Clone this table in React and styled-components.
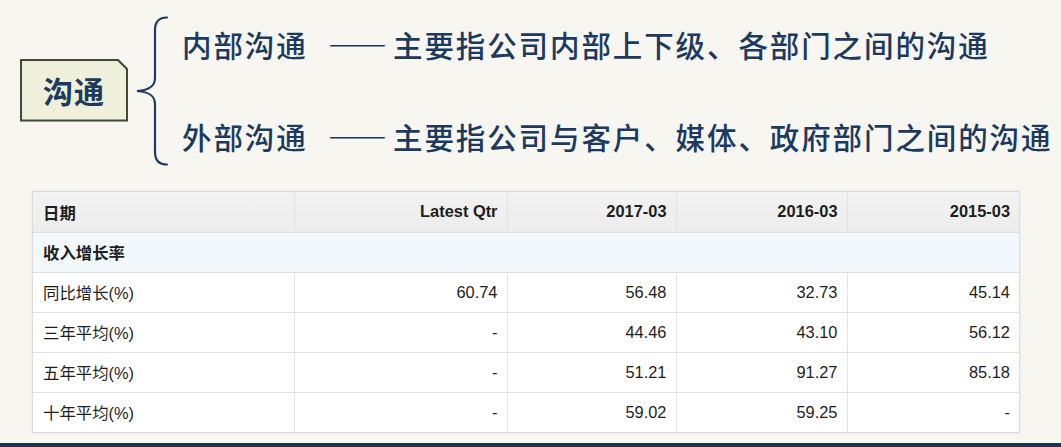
import styled, { createGlobalStyle } from "styled-components"

const GlobalStyle = createGlobalStyle`
    html, body{
        margin:0;
        padding:0;
        background:#f8f6f1;
    }
    body{
        font-family:"Liberation Sans", "Noto Sans CJK SC", sans-serif;
    }
`

const columns = [261, 213, 169, 171, 172]
const headers = ['日期', 'Latest Qtr', '2017-03', '2016-03', '2015-03']
const rows = [
    ['同比增长(%)', '60.74', '56.48', '32.73', '45.14'],
    ['三年平均(%)', '-', '44.46', '43.10', '56.12'],
    ['五年平均(%)', '-', '51.21', '91.27', '85.18'],
    ['十年平均(%)', '-', '59.02', '59.25', '-'],
]

const branches = [
    { term: '内部沟通', desc: '主要指公司内部上下级、各部门之间的沟通' },
    { term: '外部沟通', desc: '主要指公司与客户、媒体、政府部门之间的沟通' },
]

const Brace = () => (
    <BraceSvg width="34" height="150" viewBox="0 0 34 150">
        <path
            d="M32 1.5 C25 1.5 20 5 20 14 L20 62 C20 70 15 74 2 75 C15 76 20 80 20 88 L20 136 C20 145 25 148.5 32 148.5"
            fill="none"
            stroke="#1f3a5c"
            strokeWidth="2.2"
            strokeLinecap="round"
        />
    </BraceSvg>
)

const App = () => {
    return(
        <Page>
            <GlobalStyle />
            <MindMap>
                <RootNode>
                    <RootInner>沟通</RootInner>
                </RootNode>
                <Brace />
                <Branches>
                    {branches.map(b => (
                        <Branch key={b.term}>
                            <Term>{b.term}</Term>
                            <Dash>——</Dash>
                            <Desc>{b.desc}</Desc>
                        </Branch>
                    ))}
                </Branches>
            </MindMap>
            <TableWrap>
                <DataTable>
                    <colgroup>
                        {columns.map((w, i) => <col key={i} style={{ width: w }} />)}
                    </colgroup>
                    <thead>
                        <tr>
                            {headers.map((h, i) => <Th key={h} $first={i === 0}>{h}</Th>)}
                        </tr>
                    </thead>
                    <tbody>
                        <GroupRow>
                            <td colSpan={5}>收入增长率</td>
                        </GroupRow>
                        {rows.map(r => (
                            <tr key={r[0]}>
                                {r.map((c, i) => <Td key={i} $first={i === 0}>{c}</Td>)}
                            </tr>
                        ))}
                    </tbody>
                </DataTable>
            </TableWrap>
            <BottomBar />
        </Page>
    )
}

export default App


const Page = styled.div`
    width:1061px;
    height:447px;
    overflow:hidden;
    display:flex;
    flex-direction:column;
`

const MindMap = styled.div`
    display:flex;
    align-items:center;
    height:180px;
    padding-left:20px;
    color:#1c3a5e;
    font-family:"Noto Sans CJK SC", sans-serif;
`

const RootNode = styled.div`
    width:108px;
    height:63px;
    background:#3e4a34;
    clip-path:polygon(0 0, calc(100% - 10px) 0, 100% 10px, 100% 100%, 0 100%);
    display:flex;
    padding:2px;
    box-sizing:border-box;
`

const RootInner = styled.div`
    flex:1;
    background:#eef0dc;
    clip-path:polygon(0 0, calc(100% - 9px) 0, 100% 9px, 100% 100%, 0 100%);
    display:flex;
    align-items:center;
    justify-content:center;
    font-size:30px;
    font-weight:700;
    letter-spacing:1px;
    color:#1d3a5e;
`

const BraceSvg = styled.svg`
    margin-left:7px;
    margin-top:2px;
    flex-shrink:0;
`

const Branches = styled.div`
    display:flex;
    flex-direction:column;
    gap:52px;
    margin-left:13px;
`

const Branch = styled.div`
    display:flex;
    align-items:center;
    font-size:29.5px;
    line-height:40px;
    font-weight:500;
    letter-spacing:1.9px;
    white-space:nowrap;
`

const Term = styled.span`
    width:146px;
`

const Dash = styled.span`
    width:65px;
    letter-spacing:0;
    font-weight:900;
    font-feature-settings:"fwid" 1;
`

const Desc = styled.span``

const TableWrap = styled.div`
    margin:11px 0 0 32px;
    width:986px;
    border:1px solid #dcdcdc;
    box-shadow:0 0 3px rgba(0,0,0,.06);
    background:#fff;
`

const DataTable = styled.table`
    width:100%;
    border-collapse:collapse;
    table-layout:fixed;
    font-size:16.4px;
    color:#1e1e1e;

    tr{
        height:40px;
    }
`

const Th = styled.th`
    background:linear-gradient(#f2f2f2, #ececec);
    font-weight:700;
    text-align:${p => p.$first ? 'left' : 'right'};
    padding:${p => p.$first ? '0 10px' : '0 9px'};
    border-left:1px solid #e2e2e2;
    border-bottom:1px solid #dedede;
    &:first-child{ border-left:none; }
`

const GroupRow = styled.tr`
    td{
        background:#f3f8fc;
        font-weight:700;
        padding:0 10px;
        border-bottom:1px solid #dedede;
    }
`

const Td = styled.td`
    text-align:${p => p.$first ? 'left' : 'right'};
    padding:${p => p.$first ? '0 10px' : '0 9px'};
    border-left:1px solid #e4e4e4;
    border-bottom:1px solid #e2e2e2;
    &:first-child{ border-left:none; }
    tr:last-child &{ border-bottom:none; }
`

const BottomBar = styled.div`
    margin-top:auto;
    height:4px;
    background:#22344d;
`
